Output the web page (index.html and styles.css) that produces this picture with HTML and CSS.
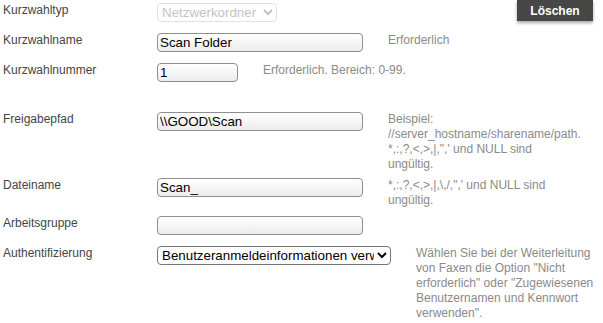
FILE: index.html
```html
<!DOCTYPE html>
<html lang="de">
<head>
    <meta charset="UTF-8">
    <meta name="viewport" content="width=device-width, initial-scale=1.0">
    <title>Kurzwahl bearbeiten</title>
    <link rel="stylesheet" href="styles.css">
</head>
<body>
    <form class="entry-form">
        <div class="form-row row-type">
            <label class="field-label" for="dial-type">Kurzwahltyp</label>
            <div class="field">
                <select id="dial-type" class="type-select" disabled>
                    <option>Netzwerkordner</option>
                </select>
            </div>
            <button type="button" class="delete-btn">Löschen</button>
        </div>

        <div class="form-row row-name">
            <label class="field-label" for="dial-name">Kurzwahlname</label>
            <div class="field">
                <input type="text" id="dial-name" class="text-input wide" value="Scan Folder">
                <span class="note">Erforderlich</span>
            </div>
        </div>

        <div class="form-row row-number">
            <label class="field-label" for="dial-number">Kurzwahlnummer</label>
            <div class="field">
                <input type="text" id="dial-number" class="text-input narrow" value="1">
                <span class="note">Erforderlich. Bereich: 0-99.</span>
            </div>
        </div>

        <div class="form-row row-path">
            <label class="field-label" for="share-path">Freigabepfad</label>
            <div class="field">
                <input type="text" id="share-path" class="text-input wide" value="\\GOOD\Scan">
                <span class="note block-note">Beispiel: //server_hostname/sharename/path. *,:,?,&lt;,&gt;,|,&quot;,' und NULL sind ungültig.</span>
            </div>
        </div>

        <div class="form-row row-file">
            <label class="field-label" for="file-name">Dateiname</label>
            <div class="field">
                <input type="text" id="file-name" class="text-input wide" value="Scan_">
                <span class="note block-note">*,:,?,&lt;,&gt;,|,\,/,&quot;,' und NULL sind ungültig.</span>
            </div>
        </div>

        <div class="form-row row-group">
            <label class="field-label" for="work-group">Arbeitsgruppe</label>
            <div class="field">
                <input type="text" id="work-group" class="text-input wide" value="">
            </div>
        </div>

        <div class="form-row row-auth">
            <label class="field-label" for="auth">Authentifizierung</label>
            <div class="field">
                <select id="auth" class="auth-select">
                    <option>Benutzeranmeldeinformationen verwenden</option>
                    <option>Nicht erforderlich</option>
                    <option>Zugewiesenen Benutzernamen und Kennwort verwenden</option>
                </select>
                <span class="note block-note">Wählen Sie bei der Weiterleitung von Faxen die Option "Nicht erforderlich" oder "Zugewiesenen Benutzernamen und Kennwort verwenden".</span>
            </div>
        </div>
    </form>
</body>
</html>
```

FILE: styles.css
```css
body {
    margin: 0;
    font-family: "Liberation Sans", Arial, sans-serif;
    font-size: 12px;
    color: #333;
    background-color: white;
}
.entry-form {
    padding: 3px 4px 0 3px;
}
.form-row {
    display: flex;
    align-items: flex-start;
}
.row-type { height: 30px; }
.row-name { height: 30px; }
.row-number { height: 49px; }
.row-path { height: 66px; }
.row-file { height: 38px; }
.row-group { height: 30px; }

.field-label {
    width: 154px;
    flex-shrink: 0;
    line-height: 15px;
    color: #444;
}
.field {
    display: flex;
    align-items: flex-start;
    flex: 1;
    min-width: 0;
}
.text-input {
    box-sizing: border-box;
    height: 19px;
    padding: 0 2px;
    border: 1px solid #8e8e8e;
    border-radius: 4px;
    background: linear-gradient(#ffffff, #ececec);
    font-family: "Liberation Sans", Arial, sans-serif;
    font-size: 13.33px;
    color: black;
    flex-shrink: 0;
}
.text-input.wide { width: 206px; }
.text-input.narrow { width: 81px; }

select {
    box-sizing: border-box;
    height: 19px;
    font-family: "Liberation Sans", Arial, sans-serif;
    font-size: 13.33px;
    border-radius: 4px;
    flex-shrink: 0;
}
.type-select {
    width: 120px;
    color: #aaa;
    border: 1px solid #d5d5d5;
    background-color: white;
}
.auth-select {
    width: 234px;
    color: black;
    border: 1px solid #767676;
    background-color: white;
}
.note {
    margin-left: 25px;
    line-height: 15px;
    color: #8a8a8a;
}
.block-note {
    width: 192px;
    flex-shrink: 1;
}
.delete-btn {
    margin: -3px 6px 0 auto;
    width: 76px;
    height: 21px;
    border: none;
    border-radius: 0;
    background-color: #474747;
    color: white;
    font-family: "Liberation Sans", Arial, sans-serif;
    font-size: 12px;
    font-weight: bold;
    box-shadow: 0 2px 3px rgba(0,0,0,0.35);
    cursor: pointer;
}
.delete-btn:hover {
    background-color: #333;
}
```
